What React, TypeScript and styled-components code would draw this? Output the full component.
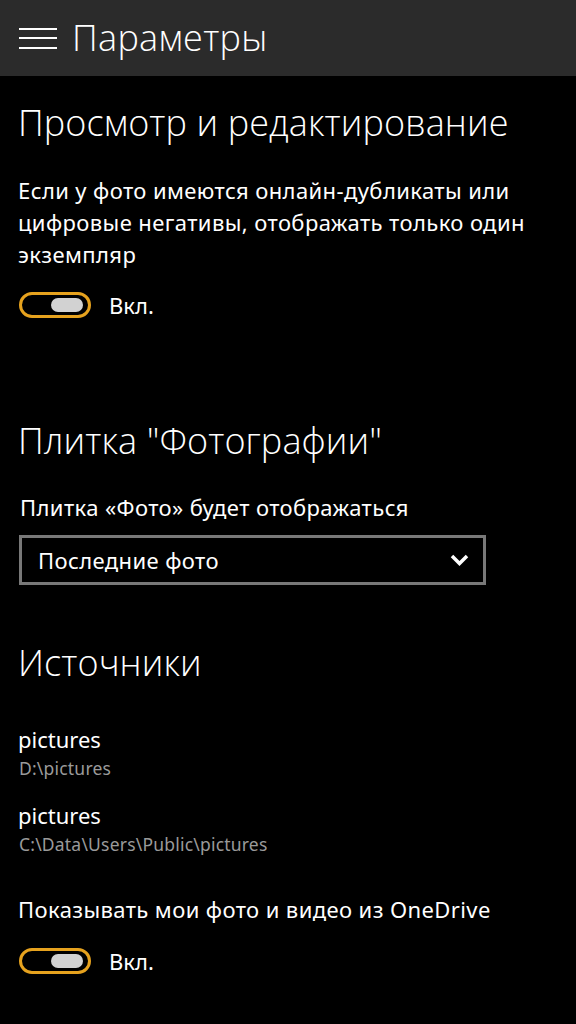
import styled, { createGlobalStyle } from 'styled-components';

const Global = createGlobalStyle`
  html, body {
    margin: 0;
    padding: 0;
    background: #000000;
  }
  body {
    font-family: "Noto Sans", "Open Sans", sans-serif;
    color: #ffffff;
  }
`;

const Page = styled.div`
  width: 576px;
  height: 1024px;
  background: #000;
  overflow: hidden;
`;

const Header = styled.header`
  height: 76px;
  background: #2b2b2b;
  display: flex;
  align-items: center;
  padding-left: 19px;
  gap: 15px;
`;

const Burger = styled.div`
  width: 38px;
  display: flex;
  flex-direction: column;
  gap: 7.5px;

  i {
    display: block;
    height: 2px;
    background: #fff;
  }
`;

const Title = styled.h1`
  margin: 0;
  font-family: "Open Sans", "Noto Sans", sans-serif;
  font-size: 36px;
  font-weight: 300;
  line-height: 1;
  letter-spacing: 0.3px;
`;

const Content = styled.main`
  padding: 0 18px;
`;

const SectionTitle = styled.h2<{ $top: number }>`
  margin: ${({ $top }) => $top}px 0 0;
  font-family: "Open Sans", "Noto Sans", sans-serif;
  font-size: 36px;
  font-weight: 300;
  line-height: 44px;
  letter-spacing: 0.1px;
`;

const Text = styled.p<{ $top: number; $indent?: number }>`
  margin: ${({ $top }) => $top}px 0 0;
  padding-left: ${({ $indent = 0 }) => $indent}px;
  font-size: 22px;
  line-height: 32px;
  letter-spacing: 0.4px;
`;

const ToggleRow = styled.div<{ $top: number }>`
  display: flex;
  align-items: center;
  gap: 18px;
  height: 32px;
  margin-top: ${({ $top }) => $top}px;
`;

const Toggle = styled.div`
  width: 72px;
  height: 26px;
  margin-left: 1px;
  box-sizing: border-box;
  border: 3px solid #e6a21e;
  border-radius: 13px;
  display: flex;
  align-items: center;
  justify-content: flex-end;
  padding-right: 5px;

  &::after {
    content: '';
    width: 32px;
    height: 14px;
    border-radius: 7px;
    background: #d2d2d2;
  }
`;

const ToggleLabel = styled.span`
  font-size: 22px;
  line-height: 32px;
`;

const Select = styled.div`
  margin: 12px 0 0 1px;
  width: 467px;
  height: 50px;
  box-sizing: border-box;
  border: 3px solid #787878;
  display: flex;
  align-items: center;
  justify-content: space-between;
  padding: 0 14px 0 16px;
  font-size: 22px;
  line-height: 32px;
  letter-spacing: 0.4px;
`;

const Source = styled.div<{ $top: number }>`
  margin-top: ${({ $top }) => $top}px;
  display: flex;
  flex-direction: column;
`;

const SourceName = styled.span`
  font-size: 22px;
  line-height: 28px;
`;

const SourcePath = styled.span`
  font-size: 17.5px;
  line-height: 30px;
  letter-spacing: 0.2px;
  color: #9a9a9a;
  padding-left: 1px;
`;

function Switch({ top }: { top: number }) {
  return (
    <ToggleRow $top={top}>
      <Toggle />
      <ToggleLabel>Вкл.</ToggleLabel>
    </ToggleRow>
  );
}

export default function App() {
  return (
    <Page>
      <Global />
      <Header>
        <Burger>
          <i />
          <i />
          <i />
        </Burger>
        <Title>Параметры</Title>
      </Header>
      <Content>
        <SectionTitle $top={25}>Просмотр и редактирование</SectionTitle>
        <Text $top={29}>
          Если у фото имеются онлайн-дубликаты или цифровые негативы, отображать только один экземпляр
        </Text>
        <Switch top={19} />
        <SectionTitle $top={98}>Плитка "Фотографии"</SectionTitle>
        <Text $top={28} $indent={2}>Плитка «Фото» будет отображаться</Text>
        <Select>
          <span>Последние фото</span>
          <svg width="19" height="12" viewBox="0 0 19 12">
            <path d="M2 2 L9.5 9.5 L17 2" stroke="#fff" strokeWidth="3.5" fill="none" />
          </svg>
        </Select>
        <SectionTitle $top={56}>Источники</SectionTitle>
        <Source $top={40}>
          <SourceName>pictures</SourceName>
          <SourcePath>D:\pictures</SourcePath>
        </Source>
        <Source $top={18}>
          <SourceName>pictures</SourceName>
          <SourcePath>C:\Data\Users\Public\pictures</SourcePath>
        </Source>
        <Text $top={34}>Показывать мои фото и видео из OneDrive</Text>
        <Switch top={20} />
      </Content>
    </Page>
  );
}
